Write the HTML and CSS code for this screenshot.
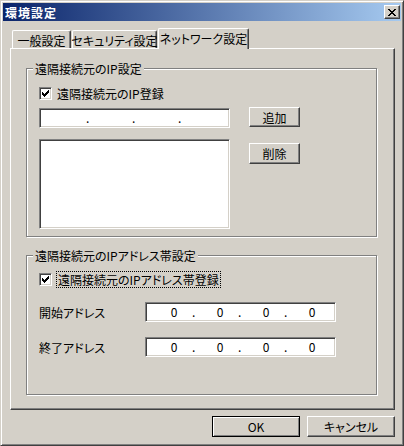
FILE: index.html
```html
<!DOCTYPE html>
<html lang="ja">
<head>
<meta charset="utf-8">
<title>環境設定</title>
<link rel="stylesheet" href="styles.css">
</head>
<body>
<div class="window">
  <div class="titlebar">
    <span class="title">環境設定</span>
    <span class="close-btn"><svg width="8" height="7" viewBox="0 0 8 7" shape-rendering="crispEdges"><path d="M0 0h2v1H0zM6 0h2v1H6zM1 1h2v1H1zM5 1h2v1H5zM2 2h4v1H2zM3 3h2v1H3zM2 4h4v1H2zM1 5h2v1H1zM5 5h2v1H5zM0 6h2v1H0zM6 6h2v1H6z" fill="#000"/></svg></span>
  </div>
  <div class="body">
    <div class="tabs">
      <div class="tab tab-general">一般設定</div>
      <div class="tab tab-security">セキュリティ設定</div>
      <div class="tab tab-network is-active">ネットワーク設定</div>
    </div>
    <div class="panel">
      <div class="group group-ip">
        <div class="group-title">遠隔接続元のIP設定</div>
        <div class="check-row">
          <span class="checkbox"><svg width="9" height="9" viewBox="0 0 9 9" shape-rendering="crispEdges"><path d="M1 3h1v1h1v1h1v-1h1v-1h1v-1h1v-1h1v3h-1v1h-1v1h-1v1h-1v1h-1v-1h-1v-1h-1z" fill="#000"/></svg></span>
          <span class="check-label">遠隔接続元のIP登録</span>
        </div>
        <div class="ip-row">
          <div class="ip-col">
            <div class="field ip-field">
              <span class="seg"></span><span class="dot">.</span>
              <span class="seg"></span><span class="dot">.</span>
              <span class="seg"></span><span class="dot">.</span>
              <span class="seg"></span>
            </div>
            <div class="field listbox"></div>
          </div>
          <div class="btn-col">
            <div class="btn btn-add">追加</div>
            <div class="btn btn-del">削除</div>
          </div>
        </div>
      </div>
      <div class="group group-range">
        <div class="group-title">遠隔接続元のIPアドレス帯設定</div>
        <div class="check-row check-row-focus">
          <span class="checkbox"><svg width="9" height="9" viewBox="0 0 9 9" shape-rendering="crispEdges"><path d="M1 3h1v1h1v1h1v-1h1v-1h1v-1h1v-1h1v3h-1v1h-1v1h-1v1h-1v1h-1v-1h-1v-1h-1z" fill="#000"/></svg></span>
          <span class="check-label focus">遠隔接続元のIPアドレス帯登録</span>
        </div>
        <div class="addr-row addr-start">
          <span class="addr-label">開始アドレス</span>
          <div class="field ip-field addr-field">
            <span class="seg">0</span><span class="dot">.</span>
            <span class="seg">0</span><span class="dot">.</span>
            <span class="seg">0</span><span class="dot">.</span>
            <span class="seg">0</span>
          </div>
        </div>
        <div class="addr-row addr-end">
          <span class="addr-label">終了アドレス</span>
          <div class="field ip-field addr-field">
            <span class="seg">0</span><span class="dot">.</span>
            <span class="seg">0</span><span class="dot">.</span>
            <span class="seg">0</span><span class="dot">.</span>
            <span class="seg">0</span>
          </div>
        </div>
      </div>
    </div>
    <div class="footer">
      <div class="btn btn-footer btn-default">OK</div>
      <div class="btn btn-footer">キャンセル</div>
    </div>
  </div>
</div>
</body>
</html>
```
FILE: styles.css
```css
* {
  box-sizing: border-box;
}

html, body {
  margin: 0;
  padding: 0;
  background: #D4D0C8;
}

body {
  font-family: "Noto Sans CJK JP", "Liberation Sans", sans-serif;
  font-size: 12px;
  line-height: 13px;
  color: #000;
  font-feature-settings: "palt" 1;
}

.window {
  width: 404px;
  height: 446px;
  border: 1px solid;
  border-color: #D4D0C8 #404040 #404040 #D4D0C8;
  box-shadow: inset 1px 1px #fff, inset -1px -1px #808080;
  padding: 2px;
  display: flex;
  flex-direction: column;
  background: #D4D0C8;
  overflow: hidden;
}

.titlebar {
  flex: none;
  height: 18px;
  display: flex;
  align-items: center;
  justify-content: space-between;
  padding: 0 1px 0 2px;
  background: linear-gradient(to right, #0A246A, #A6CAF0);
}

.title {
  color: #fff;
  font-weight: bold;
  letter-spacing: 1px;
}

.close-btn {
  width: 16px;
  height: 14px;
  display: flex;
  align-items: center;
  justify-content: center;
  background: #D4D0C8;
  border: 1px solid;
  border-color: #fff #404040 #404040 #fff;
  box-shadow: inset -1px -1px #808080;
}

.close-btn svg {
  display: block;
}

.body {
  flex: 1;
  display: flex;
  flex-direction: column;
  padding: 7px 6px 0 7px;
}

.tabs {
  flex: none;
  height: 20px;
  display: flex;
  align-items: flex-end;
  padding-left: 2px;
}

.tab {
  height: 18px;
  display: flex;
  align-items: center;
  justify-content: center;
  white-space: nowrap;
  padding-top: 2px;
  border-top: 1px solid #fff;
  border-left: 1px solid #fff;
  border-right: 1px solid #404040;
  box-shadow: inset -1px 0 #808080;
  border-top-left-radius: 2px;
  border-top-right-radius: 2px;
}

.tab-general {
  width: 59px;
}

.tab-security {
  width: 85px;
  margin-left: 1px;
}

.tab-network {
  width: 91px;
  margin-left: 1px;
}

.tab.is-active {
  height: 21px;
  margin-bottom: -1px;
  padding-top: 0;
  padding-bottom: 1px;
  position: relative;
  z-index: 1;
  background: #D4D0C8;
}

.panel {
  flex: none;
  height: 362px;
  border: 1px solid;
  border-color: #fff #404040 #404040 #fff;
  box-shadow: inset -1px -1px #808080;
  padding: 19px 17px 0 15px;
}

.group {
  display: flex;
  flex-direction: column;
  align-items: flex-start;
  border: 1px solid #808080;
  box-shadow: inset 1px 1px #fff, 1px 1px #fff;
  padding-left: 12px;
}

.group-ip {
  height: 169px;
}

.group-range {
  height: 140px;
  margin-top: 18px;
}

.group-title {
  height: 13px;
  margin: -7px 0 0 -6px;
  padding: 0 2px;
  background: #D4D0C8;
  white-space: nowrap;
}

.check-row {
  display: flex;
  align-items: center;
  height: 13px;
  margin-top: 12px;
}

.check-row-focus {
  height: 17px;
  margin-top: 9px;
}

.checkbox {
  width: 13px;
  height: 13px;
  flex: none;
  display: flex;
  align-items: center;
  justify-content: center;
  background: #fff;
  border: 1px solid;
  border-color: #808080 #fff #fff #808080;
  box-shadow: inset 1px 1px #404040, inset -1px -1px #D4D0C8;
}

.checkbox svg {
  display: block;
}

.check-label {
  margin-left: 5px;
  white-space: nowrap;
}

.check-label.focus {
  margin-left: 4px;
  height: 17px;
  line-height: 15px;
  padding: 0 1px;
  border: 1px dotted #000;
}

.ip-row {
  display: flex;
  margin-top: 8px;
}

.ip-col {
  width: 191px;
  display: flex;
  flex-direction: column;
}

.field {
  background: #fff;
  border: 1px solid;
  border-color: #808080 #fff #fff #808080;
  box-shadow: inset 1px 1px #404040, inset -1px -1px #D4D0C8;
}

.ip-field {
  height: 20px;
  display: flex;
  align-items: center;
  padding-left: 10px;
}

.seg {
  width: 36px;
  text-align: center;
  line-height: 16px;
}

.dot {
  width: 10px;
  line-height: 16px;
}

.listbox {
  height: 90px;
  margin-top: 11px;
}

.btn-col {
  display: flex;
  flex-direction: column;
  margin-left: 19px;
}

.btn {
  display: flex;
  align-items: center;
  justify-content: center;
  white-space: nowrap;
  background: #D4D0C8;
  border: 1px solid;
  border-color: #fff #404040 #404040 #fff;
  box-shadow: inset -1px -1px #808080;
}

.btn-add {
  width: 51px;
  height: 20px;
  margin-top: -1px;
}

.btn-del {
  width: 51px;
  height: 21px;
  margin-top: 16px;
}

.addr-row {
  display: flex;
  align-items: center;
  height: 20px;
}

.addr-start {
  margin-top: 14px;
}

.addr-end {
  margin-top: 15px;
}

.addr-label {
  width: 106px;
  white-space: nowrap;
}

.addr-field {
  width: 191px;
}

.footer {
  display: flex;
  justify-content: flex-end;
  gap: 7px;
  margin-top: 6px;
}

.btn-footer {
  width: 88px;
  height: 21px;
}

.btn-default {
  border: 1px solid #000;
  box-shadow: inset 1px 1px #fff, inset -1px -1px #808080;
}
```
